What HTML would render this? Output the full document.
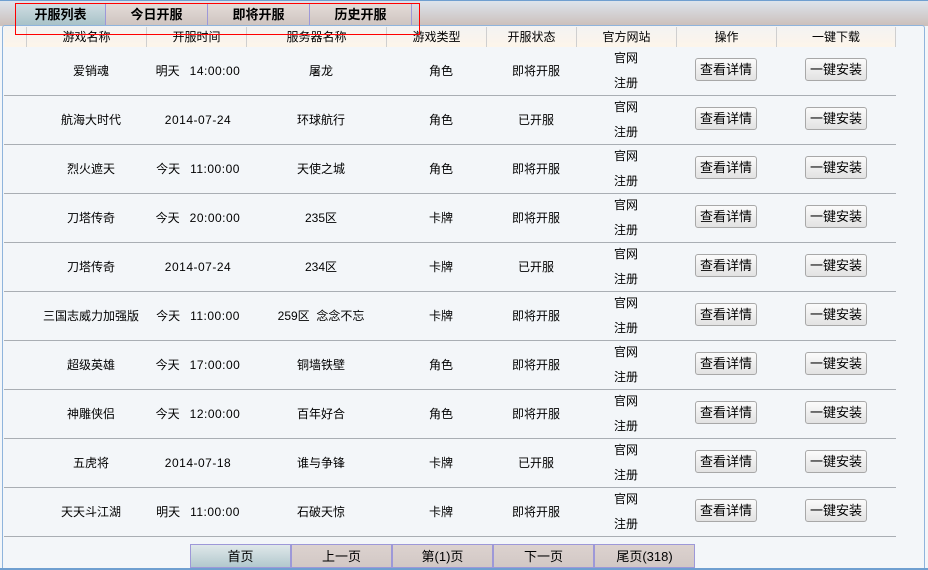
<!DOCTYPE html>
<html><head><meta charset="utf-8"><style>
*{margin:0;padding:0;box-sizing:border-box}
body{width:928px;height:570px;overflow:hidden;background:#f3f6f9;font-family:"Liberation Sans","Noto Sans CJK SC","WenQuanYi Zen Hei",sans-serif;font-size:12px;color:#000;position:relative}
.a{position:absolute}
.top{left:0;top:0;width:928px;height:26px;background:linear-gradient(#dde4ec,#cbbfba);border-top:1px solid #6f9fd0}
.tab{top:3px;height:22px;background:linear-gradient(#e3dcd8,#cfc4c0);border:1px solid #9d98d8;border-bottom:none;font-weight:bold;font-size:13px;text-align:center;line-height:22px}
.tab.on{background:linear-gradient(#cfdde2,#a8c2c8)}
.panel{left:2px;top:25px;width:923px;height:545px;border:1px solid #8fb4dc;border-bottom:none;border-radius:3px 3px 0 0;background:#f3f6f9}
.hdr{left:4px;top:26px;width:892px;height:21px;background:linear-gradient(#f3f3f3,#fdf5ea)}
.hc{top:27px;height:20px;line-height:20px;text-align:center;border-left:1px solid #cfcfcf}
.line{left:4px;width:892px;height:1px;background:#a9aeb4}
.c{text-align:center;line-height:16px}
.t{letter-spacing:0.5px}
.btn{width:62px;height:23px;border:1px solid #a8a8a8;border-radius:3px;background:linear-gradient(#fbfbfb,#e2e2e2);text-align:center;line-height:21px;font-size:13px}
.pg{top:544px;height:24px;width:101px;border:1px solid #9d98d8;background:linear-gradient(#dcd2cf,#d2c8c5);text-align:center;line-height:24px;font-size:13px}
.pg.on{background:linear-gradient(#dfe8ea,#b2c8cd)}
.red{left:15px;top:3px;width:405px;height:32px;border:1px solid #f00}
</style></head><body>
<div class="a top"></div>
<div class="a panel"></div>
<div class="a tab on" style="left:15px;width:91px">开服列表</div>
<div class="a tab" style="left:105px;width:103px">今日开服</div>
<div class="a tab" style="left:207px;width:103px">即将开服</div>
<div class="a tab" style="left:309px;width:103px">历史开服</div>
<div class="a hdr"></div>
<div class="a hc" style="left:26px;width:120px">游戏名称</div>
<div class="a hc" style="left:146px;width:100px">开服时间</div>
<div class="a hc" style="left:246px;width:140px">服务器名称</div>
<div class="a hc" style="left:386px;width:100px">游戏类型</div>
<div class="a hc" style="left:486px;width:90px">开服状态</div>
<div class="a hc" style="left:576px;width:100px">官方网站</div>
<div class="a hc" style="left:676px;width:100px">操作</div>
<div class="a hc" style="left:776px;width:120px;border-right:1px solid #cfcfcf">一键下载</div>
<div class="a red"></div>
<div id="rows"></div>
<script>
var d=[["爱销魂","明天&nbsp;&nbsp;&nbsp;<span class=t>14:00:00</span>","屠龙","角色","即将开服"],
["航海大时代","<span class=t>2014-07-24</span>","环球航行","角色","已开服"],
["烈火遮天","今天&nbsp;&nbsp;&nbsp;<span class=t>11:00:00</span>","天使之城","角色","即将开服"],
["刀塔传奇","今天&nbsp;&nbsp;&nbsp;<span class=t>20:00:00</span>","235区","卡牌","即将开服"],
["刀塔传奇","<span class=t>2014-07-24</span>","234区","卡牌","已开服"],
["三国志威力加强版","今天&nbsp;&nbsp;&nbsp;<span class=t>11:00:00</span>","259区&nbsp;&nbsp;念念不忘","卡牌","即将开服"],
["超级英雄","今天&nbsp;&nbsp;&nbsp;<span class=t>17:00:00</span>","铜墙铁壁","角色","即将开服"],
["神雕侠侣","今天&nbsp;&nbsp;&nbsp;<span class=t>12:00:00</span>","百年好合","角色","即将开服"],
["五虎将","<span class=t>2014-07-18</span>","谁与争锋","卡牌","已开服"],
["天天斗江湖","明天&nbsp;&nbsp;&nbsp;<span class=t>11:00:00</span>","石破天惊","卡牌","即将开服"]];
var h="";
for(var i=0;i<10;i++){var y=47+i*49,r=d[i],m=y+16;
h+='<div class="a c" style="left:31px;width:120px;top:'+m+'px">'+r[0]+'</div>';
h+='<div class="a c" style="left:148px;width:100px;top:'+m+'px">'+r[1]+'</div>';
h+='<div class="a c" style="left:246px;width:150px;top:'+m+'px">'+r[2]+'</div>';
h+='<div class="a c" style="left:386px;width:110px;top:'+m+'px">'+r[3]+'</div>';
h+='<div class="a c" style="left:486px;width:100px;top:'+m+'px">'+r[4]+'</div>';
h+='<div class="a c" style="left:576px;width:100px;top:'+(y+3)+'px">官网</div>';
h+='<div class="a c" style="left:576px;width:100px;top:'+(y+28)+'px">注册</div>';
h+='<div class="a btn" style="left:695px;top:'+(y+11)+'px">查看详情</div>';
h+='<div class="a btn" style="left:805px;top:'+(y+11)+'px">一键安装</div>';
h+='<div class="a line" style="top:'+(y+48)+'px"></div>';}
document.getElementById("rows").innerHTML=h;
</script>
<div class="a pg on" style="left:190px">首页</div>
<div class="a pg" style="left:291px">上一页</div>
<div class="a pg" style="left:392px">第(1)页</div>
<div class="a pg" style="left:493px">下一页</div>
<div class="a pg" style="left:594px">尾页(318)</div>
<div class="a" style="left:0;top:568px;width:928px;height:2px;background:#6f9fd0"></div>
</body></html>
